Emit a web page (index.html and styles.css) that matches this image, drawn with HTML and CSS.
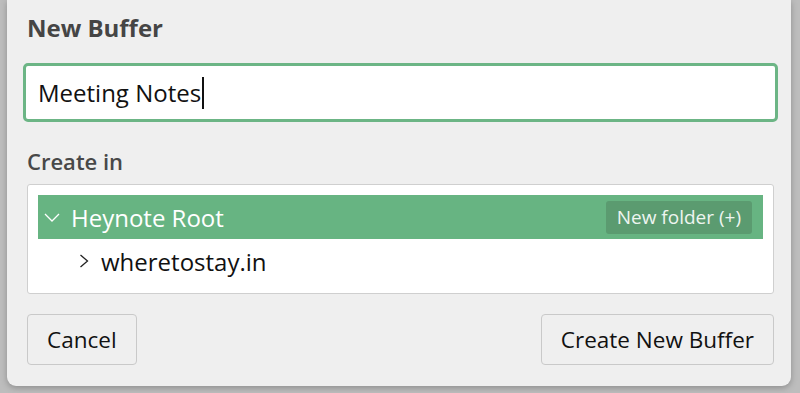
FILE: index.html
```html
<!DOCTYPE html>
<html lang="en">
<head>
  <meta charset="UTF-8">
  <meta name="viewport" content="width=device-width, initial-scale=1.0">
  <title>New Buffer</title>
  <link rel="stylesheet" href="styles.css">
</head>
<body>
  <div class="dialog">
    <h1 class="title">New Buffer</h1>

    <div class="name-input">
      <span class="value">Meeting Notes</span><span class="caret"></span>
    </div>

    <h2 class="label">Create in</h2>

    <div class="tree">
      <div class="row selected">
        <svg class="chevron down" width="16" height="9" viewBox="0 0 16 9">
          <path d="M1 1 L8 8 L15 1" fill="none" stroke="currentColor" stroke-width="1.3"/>
        </svg>
        <span class="name">Heynote Root</span>
        <span class="new-folder">New folder (+)</span>
      </div>
      <div class="row child">
        <svg class="chevron right" width="10" height="14" viewBox="0 0 10 14">
          <path d="M1.5 1 L8.5 7 L1.5 13" fill="none" stroke="currentColor" stroke-width="1.3"/>
        </svg>
        <span class="name">wheretostay.in</span>
      </div>
    </div>

    <div class="actions">
      <button class="btn">Cancel</button>
      <button class="btn">Create New Buffer</button>
    </div>
  </div>
</body>
</html>
```

FILE: styles.css
```css
html, body {
  margin: 0;
  height: 100%;
}

body {
  font-family: "Open Sans", "DejaVu Sans", sans-serif;
  background-color: #bdbdbd;
  overflow: hidden;
}

.dialog {
  box-sizing: border-box;
  height: 386px;
  margin: 0 9px 0 7px;
  padding: 0 17px 0 20px;
  background-color: #efefef;
  border-radius: 0 0 9px 9px;
  box-shadow: 0 2px 6px rgba(0, 0, 0, 0.25);
  display: flex;
  flex-direction: column;
}

.title {
  margin: 12px 0 0;
  font-size: 24px;
  font-weight: 700;
  color: #454545;
  line-height: 32px;
}

.name-input {
  margin: 19px -4px 0;
  height: 59px;
  box-sizing: border-box;
  border: 3px solid #6cb585;
  border-radius: 5px;
  background-color: #fff;
  display: flex;
  align-items: center;
  padding-left: 12px;
  font-size: 24px;
  color: #111;
}

.caret {
  display: inline-block;
  width: 1.5px;
  height: 32px;
  background-color: #111;
  margin-left: 1px;
}

.label {
  margin: 24px 0 0;
  font-size: 22px;
  font-weight: 600;
  color: #484848;
  line-height: 30px;
}

.tree {
  margin-top: 8px;
  background-color: #fff;
  border: 1px solid #cfcfcf;
  border-radius: 3px;
  padding: 10px;
}

.row {
  height: 44px;
  display: flex;
  align-items: center;
  font-size: 24px;
  color: #111;
}

.row.selected {
  background-color: #67b482;
  color: #fff;
  padding: 0 11px 0 6px;
}

.row.child {
  padding-left: 41px;
}

.chevron.down {
  margin-right: 11px;
}

.chevron.right {
  margin-right: 12px;
  color: #222;
}

.new-folder {
  margin-left: auto;
  background-color: #5b9b70;
  color: #eef5f0;
  font-size: 19px;
  padding: 0 11px;
  height: 33px;
  line-height: 33px;
  border-radius: 3px;
}

.actions {
  margin-top: 20px;
  display: flex;
  justify-content: space-between;
}

.btn {
  font-family: inherit;
  font-size: 22.5px;
  color: #111;
  background-color: #efefef;
  border: 1px solid #c9c9c9;
  border-radius: 4px;
  height: 51px;
  padding: 0 19px;
  cursor: pointer;
}
```
